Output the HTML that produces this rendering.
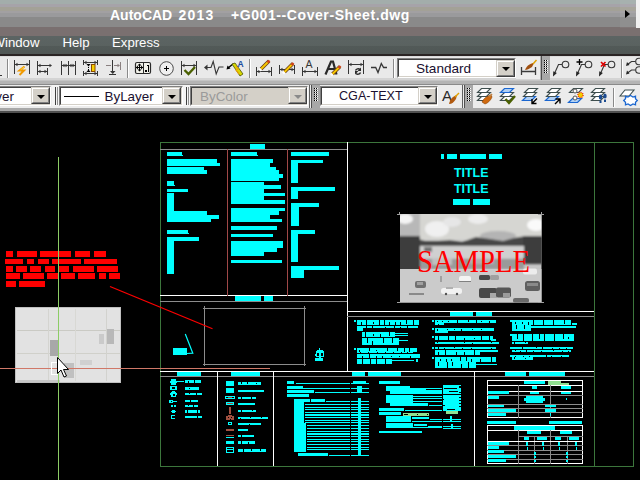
<!DOCTYPE html>
<html><head><meta charset="utf-8">
<style>
html,body{margin:0;padding:0;width:640px;height:480px;overflow:hidden;background:#000;}
body{position:relative;font-family:"Liberation Sans",sans-serif;}
.a{position:absolute;}
#title{left:0;top:0;width:640px;height:56px;
background:linear-gradient(to bottom,#a3adab 0px,#a3adab 4px,#a6a3a9 4px,#a6a3a9 7.5px,#a3a197 7.5px,#a3a197 11px,#a2a0a2 11px,#a2a0a2 13.5px,#9a9a9c 13.5px,#9a9a9c 17.5px,#8a8a8a 17.5px,#8a8a8a 27px,#7a7070 27px,#7a7070 36.5px,#5c6463 36.5px,#5a6260 46px,#525a58 46px,#505755 54px,#2a2424 54px,#2a2424 56px);}
.tt{color:#fff;font-weight:bold;font-size:14px;top:7px;white-space:nowrap;}
.mm{color:#fff;font-size:13.2px;top:35px;white-space:nowrap;}
#tb1{left:0;top:56px;width:640px;height:24px;background:#e9e9e9;}
#tb2{left:0;top:80px;width:640px;height:34px;
background:linear-gradient(to bottom,#c4c4c4 0px,#c4c4c4 1px,#b4b4b4 1px,#b4b4b4 4px,#8a8a8a 4px,#8a8a8a 5px,#ececec 5px,#ececec 28px,#a8a8a8 28px,#a8a8a8 31px,#505050 31px,#505050 33px,#000 33px);}
.combo{position:absolute;background:#fff;border-top:1px solid #808080;border-left:1px solid #808080;border-bottom:1px solid #fff;border-right:1px solid #fff;box-sizing:border-box;}
.combo .in{position:absolute;left:0;top:0;right:0;bottom:0;border-top:1px solid #404040;border-left:1px solid #404040;border-bottom:1px solid #d4d0c8;border-right:1px solid #d4d0c8;}
.btn{position:absolute;background:#d4d0c8;box-sizing:border-box;border-top:1px solid #d4d0c8;border-left:1px solid #d4d0c8;border-right:1px solid #404040;border-bottom:1px solid #404040;}
.btn .in2{position:absolute;left:0;top:0;right:0;bottom:0;border-top:1px solid #fff;border-left:1px solid #fff;border-right:1px solid #808080;border-bottom:1px solid #808080;}
.tri{position:absolute;width:0;height:0;border-left:4px solid transparent;border-right:4px solid transparent;border-top:4px solid #000;}
.ct{position:absolute;font-size:13.4px;color:#1a1030;white-space:nowrap;}
</style></head><body>
<div id="title" class="a"></div>
<div class="a tt" style="left:110px;">AutoCAD</div>
<div class="a tt" style="left:178.5px;letter-spacing:1.2px;">2013</div>
<div class="a tt" style="left:231px;letter-spacing:0.58px;">+G001--Cover-Sheet.dwg</div>
<div class="a" style="left:620px;top:0;width:16px;height:28px;background:rgba(255,255,255,0.05);"></div>
<div class="a" style="left:636px;top:0;width:4px;height:28px;background:#f0f0f0;"></div>
<div class="a" style="left:625px;top:10px;width:0;height:0;border-top:4.5px solid transparent;border-bottom:4.5px solid transparent;border-left:5px solid #000;"></div>
<div class="a mm" style="left:-7.5px;">Window</div>
<div class="a mm" style="left:62.5px;">Help</div>
<div class="a mm" style="left:112px;">Express</div>

<div id="tb1" class="a"></div>
<div id="tb2" class="a"></div>


<svg class="a" style="left:0;top:0" width="640" height="114" viewBox="0 0 640 114">
<g shape-rendering="crispEdges">
<rect x="0" y="56" width="640" height="1" fill="#dcdcdc"/>
<rect x="0" y="78" width="640" height="2" fill="#d4d4d4"/>
<!-- separators row1 -->
<rect x="7" y="59" width="1" height="19" fill="#8a8a8a"/><rect x="8" y="59" width="1" height="19" fill="#fff"/>
<rect x="127" y="59" width="1" height="19" fill="#8a8a8a"/><rect x="128" y="59" width="1" height="19" fill="#fff"/>
<rect x="249" y="59" width="1" height="19" fill="#8a8a8a"/><rect x="250" y="59" width="1" height="19" fill="#fff"/>
<rect x="393" y="59" width="1" height="19" fill="#8a8a8a"/><rect x="394" y="59" width="1" height="19" fill="#fff"/>
<rect x="621" y="59" width="1" height="19" fill="#8a8a8a"/><rect x="622" y="59" width="1" height="19" fill="#fff"/>
</g>
<g shape-rendering="crispEdges">
<rect x="0" y="75" width="2" height="1" fill="#363636"/>
<rect x="14" y="60" width="1" height="14" fill="#363636"/>
<rect x="29" y="60" width="1" height="14" fill="#363636"/>
<rect x="15" y="64" width="14" height="1" fill="#363636"/>
</g>
<path d="M15 64.5l2.5-1.8v3.6z" fill="#363636"/>
<path d="M29 64.5l-2.5-1.8v3.6z" fill="#363636"/>
<g shape-rendering="crispEdges">
<rect x="37" y="61" width="1" height="14" fill="#363636"/>
<rect x="38" y="65" width="13" height="1" fill="#363636"/>
<rect x="47" y="68" width="1" height="7" fill="#363636"/>
<rect x="38" y="71" width="9" height="1" fill="#363636"/>
</g>
<path d="M38 65.5l2.5-1.8v3.6z" fill="#363636"/>
<path d="M52 65.5l-2.5-1.8v3.6z" fill="#363636"/>
<path d="M38 71.5l2.5-1.8v3.6z" fill="#363636"/>
<path d="M47 71.5l-2.5-1.8v3.6z" fill="#363636"/>
<g shape-rendering="crispEdges">
<rect x="61" y="61" width="1" height="14" fill="#363636"/>
<rect x="68" y="61" width="1" height="14" fill="#363636"/>
<rect x="75" y="61" width="1" height="14" fill="#363636"/>
<rect x="62" y="65" width="13" height="1" fill="#363636"/>
</g>
<path d="M62 65.5l2.5-1.8v3.6z" fill="#363636"/>
<path d="M68 65.5l-2.5-1.8v3.6z" fill="#363636"/>
<path d="M69 65.5l2.5-1.8v3.6z" fill="#363636"/>
<path d="M75 65.5l-2.5-1.8v3.6z" fill="#363636"/>
<g shape-rendering="crispEdges">
<rect x="83" y="60" width="1" height="5" fill="#363636"/>
<rect x="97" y="60" width="1" height="5" fill="#363636"/>
<rect x="84" y="62" width="13" height="1" fill="#363636"/>
<rect x="83" y="71" width="1" height="5" fill="#363636"/>
<rect x="97" y="71" width="1" height="5" fill="#363636"/>
<rect x="84" y="73" width="13" height="1" fill="#363636"/>
<rect x="88" y="67" width="1" height="1" fill="#000"/>
<rect x="88" y="69" width="1" height="1" fill="#000"/>
</g>
<path d="M84 62.5l2.5-1.8v3.6z" fill="#363636"/>
<path d="M97 62.5l-2.5-1.8v3.6z" fill="#363636"/>
<path d="M84 73.5l2.5-1.8v3.6z" fill="#363636"/>
<path d="M97 73.5l-2.5-1.8v3.6z" fill="#363636"/>
<path d="M86.5 64h4l-2 2.5z" fill="#000"/><path d="M86.5 72h4l-2-2.5z" fill="#000"/>
<rect x="91.5" y="64.5" width="3.5" height="7" fill="#f8d000" stroke="#8a4a00" stroke-width="1"/>
<g shape-rendering="crispEdges">
<rect x="112" y="60" width="1" height="11" fill="#363636"/>
<rect x="109" y="74" width="7" height="1" fill="#363636"/>
<rect x="106" y="65" width="5" height="1" fill="#8a8080"/>
<rect x="114" y="65" width="5" height="1" fill="#8a8080"/>
<rect x="120" y="62" width="1" height="8" fill="#8a8080"/>
</g>
<path d="M24.5 66.5l-5 4h4.5l-4.5 4.5" stroke="#f09a00" stroke-width="2" fill="none"/><path d="M24 67l-3.5 3" stroke="#ffe040" stroke-width="0.8"/>
<path d="M110 71h5.5l-2.75 3z" fill="#363636"/>
<path d="M120 65.5l-2.5-1.8v3.6z" fill="#8a8080"/>
<rect x="135.5" y="62.5" width="15" height="11" rx="1.5" fill="#f2f2ea" stroke="#2a2a2a" stroke-width="1.2"/>
<g shape-rendering="crispEdges">
<rect x="143" y="63" width="1" height="10" fill="#2a2a2a"/>
<rect x="139" y="64" width="1" height="7" fill="#000"/>
<rect x="136" y="67" width="7" height="1" fill="#000"/>
<rect x="145" y="70" width="1.5" height="2" fill="#000"/>
<rect x="147.5" y="64.5" width="1.5" height="7.5" fill="#000"/><rect x="146.5" y="65" width="1" height="1" fill="#000"/>
</g>
<path d="M139.5 63.5l-2 2h4zM139.5 71.5l-2-2h4zM136 67.5l2-2v4zM143 67.5l-2-2v4z" fill="#000"/>
<circle cx="166.5" cy="68.5" r="6.8" fill="#efefef" stroke="#4a4a4a" stroke-width="1"/>
<g shape-rendering="crispEdges">
<rect x="166" y="66" width="1.4" height="5" fill="#000"/>
<rect x="164" y="67.8" width="5" height="1.4" fill="#000"/>
<rect x="181" y="61" width="1" height="14" fill="#363636"/>
<rect x="196" y="61" width="1" height="14" fill="#363636"/>
<rect x="182" y="65" width="14" height="1" fill="#363636"/>
</g>
<path d="M182 65.5l2.5-1.8v3.6z" fill="#363636"/>
<path d="M196 65.5l-2.5-1.8v3.6z" fill="#363636"/>
<path d="M184.5 70l4 4 6.5-7" stroke="#4a6000" stroke-width="2.4" fill="none"/>
<path d="M205 67.5h6l2.2-6 3 12.5 2.8-7h4.5" stroke="#363636" stroke-width="1.1" fill="none"/>
<path d="M204 67.5l3.5-3v6z" fill="#363636"/>
<path d="M228 68l5-4" stroke="#000" stroke-width="1.4"/><path d="M226.5 69.5l1-4 3 3z" fill="#000"/>
<path d="M232 64l3-1 8 11-3 2z" fill="#d8d800" stroke="#4a5000" stroke-width="0.8"/>
<path d="M236 66l2 3-2 1 3 4" stroke="#f0a000" stroke-width="1.2" fill="none"/>
<text x="237.5" y="66.5" font-size="8.5" font-weight="bold" fill="#1a4aa0" font-family="Liberation Sans">A</text>
<g shape-rendering="crispEdges">
<rect x="256" y="67" width="1" height="9" fill="#363636"/>
<rect x="271" y="67" width="1" height="9" fill="#363636"/>
<rect x="257" y="71" width="14" height="1" fill="#363636"/>
<rect x="279" y="65" width="1" height="9" fill="#363636"/>
<rect x="294" y="65" width="1" height="9" fill="#363636"/>
<rect x="280" y="69" width="14" height="1" fill="#363636"/>
<rect x="302" y="67" width="1" height="9" fill="#363636"/>
<rect x="317" y="67" width="1" height="9" fill="#363636"/>
<rect x="303" y="71" width="14" height="1" fill="#363636"/>
<rect x="348" y="60" width="1" height="14" fill="#363636"/>
<rect x="363" y="60" width="1" height="14" fill="#363636"/>
<rect x="349" y="64" width="14" height="1" fill="#363636"/>
</g>
<path d="M257 71.5l2.5-1.8v3.6z" fill="#363636"/>
<path d="M271 71.5l-2.5-1.8v3.6z" fill="#363636"/>
<path d="M280 69.5l2.5-1.8v3.6z" fill="#363636"/>
<path d="M294 69.5l-2.5-1.8v3.6z" fill="#363636"/>
<path d="M303 71.5l2.5-1.8v3.6z" fill="#363636"/>
<path d="M317 71.5l-2.5-1.8v3.6z" fill="#363636"/>
<path d="M349 64.5l2.5-1.8v3.6z" fill="#363636"/>
<path d="M363 64.5l-2.5-1.8v3.6z" fill="#363636"/>
<path d="M325.5 74.5L331 61.5h2L336.5 74.5M328 69h6" stroke="#2a2a2a" stroke-width="2.2" fill="none"/>
<g stroke-linecap="butt">
<path d="M261 69L269 61" stroke="#6a3a10" stroke-width="3.6"/><path d="M261 69L269 61" stroke="#f8c800" stroke-width="2"/>
<path d="M267.5 62.5L269.5 60.5" stroke="#d04020" stroke-width="2.4"/>
<path d="M261 69l-1.5 1.5" stroke="#fff" stroke-width="2.6"/>
<path d="M284.5 72L293 63.5" stroke="#6a3a10" stroke-width="3.6"/><path d="M284.5 72L293 63.5" stroke="#f8c800" stroke-width="2"/>
<path d="M291.5 65.0L293.5 63.0" stroke="#d04020" stroke-width="2.4"/>
<path d="M284.5 72l-1.5 1.5" stroke="#fff" stroke-width="2.6"/>
<path d="M332.5 74L340 66.5" stroke="#6a3a10" stroke-width="3.6"/><path d="M332.5 74L340 66.5" stroke="#f8c800" stroke-width="2"/>
<path d="M338.5 68.0L340.5 66.0" stroke="#d04020" stroke-width="2.4"/>
<path d="M332.5 74l-1.5 1.5" stroke="#fff" stroke-width="2.6"/>
</g>
<text x="305.5" y="68" font-size="10.5" fill="#363636" font-family="Liberation Sans">A</text>
<path d="M355.5 70.5a2.8 2.8 0 0 1 4.5-1M360.5 72.5a2.8 2.8 0 0 1 -4.5 1" stroke="#2a2a2a" stroke-width="1.4" fill="none"/><path d="M361 67.5v3.5h-3.5zM355 74.5v-3.5h3.5z" fill="#2a2a2a"/>
<path d="M371 67.5h4.7l2.3 5 3.3-9 2.3 4h3.4" stroke="#363636" stroke-width="1.3" fill="none"/>
<!-- standard combo bg -->
</svg>


<!-- combos -->
<div class="combo" style="left:397px;top:58px;width:119px;height:20px;"><div class="in"></div></div>
<div class="btn" style="left:496px;top:60px;width:19px;height:17px;"><div class="in2"></div></div>
<div class="tri" style="left:501.5px;top:67px;"></div>
<div class="ct" style="left:416px;top:61px;font-size:13.6px;">Standard</div>
<div class="a" style="left:516px;top:57px;width:24px;height:22px;background:#ececec;"></div>
<div class="a" style="left:540px;top:56px;width:2px;height:24px;background:#b0b0b0;"></div>
<div class="a" style="left:541px;top:56px;width:9px;height:24px;background:#a8a8a8;border-left:1px solid #505050;box-sizing:border-box;"></div>

<!-- row2 -->
<div class="combo" style="left:-4px;top:86px;width:55px;height:20px;"><div class="in"></div></div>
<div class="btn" style="left:31px;top:87px;width:19px;height:17px;"><div class="in2"></div></div>
<div class="tri" style="left:36.5px;top:94.5px;"></div>
<div class="ct" style="left:-19.6px;top:89px;">Layer</div>
<div class="a" style="left:52px;top:85px;width:7px;height:21px;background:#f4f4f4;"></div>
<div class="a" style="left:54.5px;top:87px;width:1px;height:18px;background:#404040;"></div>
<div class="a" style="left:56.5px;top:87px;width:1px;height:18px;background:#909090;"></div>
<div class="a" style="left:183px;top:85px;width:7px;height:21px;background:#f4f4f4;"></div>
<div class="a" style="left:185.5px;top:87px;width:1px;height:18px;background:#404040;"></div>
<div class="a" style="left:187.5px;top:87px;width:1px;height:18px;background:#909090;"></div>
<div class="combo" style="left:59px;top:86px;width:124px;height:20px;"><div class="in"></div></div>
<div class="btn" style="left:162px;top:87px;width:19px;height:17px;"><div class="in2"></div></div>
<div class="tri" style="left:167.5px;top:94.5px;"></div>
<div class="a" style="left:64px;top:96px;width:35px;height:1px;background:#000;"></div>
<div class="ct" style="left:104.5px;top:89px;">ByLayer</div>
<div class="combo" style="left:190px;top:86px;width:118px;height:20px;background:#d4d0c8"><div class="in"></div></div>
<div class="btn" style="left:288px;top:87px;width:19px;height:17px;"><div class="in2"></div></div>
<div class="tri" style="left:293.5px;top:94.5px;border-top-color:#8a8a8a"></div>
<div class="ct" style="left:200px;top:89px;color:#9a9a9a;">ByColor</div>
<div class="a" style="left:309px;top:85px;width:1px;height:23px;background:#606060;"></div><div class="a" style="left:311px;top:85px;width:9px;height:23px;background:#a8a8a8;border-left:1px solid #505050;box-sizing:border-box;"></div>
<div class="combo" style="left:320px;top:86px;width:118px;height:20px;"><div class="in"></div></div>
<div class="btn" style="left:418px;top:87px;width:19px;height:17px;"><div class="in2"></div></div>
<div class="tri" style="left:423.5px;top:94.5px;"></div>
<div class="ct" style="left:339px;top:89px;font-size:12.6px;">CGA-TEXT</div>
<div class="a" style="left:438px;top:85px;width:24px;height:22px;background:#ececec;"></div>
<div class="a" style="left:462px;top:85px;width:1px;height:23px;background:#606060;"></div><div class="a" style="left:464px;top:85px;width:9px;height:23px;background:#a8a8a8;border-left:1px solid #505050;box-sizing:border-box;"></div>


<svg class="a" style="left:0;top:0" width="640" height="114" viewBox="0 0 640 114">
<g shape-rendering="crispEdges">
<rect x="613" y="88" width="1" height="19" fill="#8a8a8a"/><rect x="614" y="88" width="1" height="19" fill="#fff"/>
</g>
<!-- grips dots -->
<g shape-rendering="crispEdges"><rect x="544" y="60" width="1" height="1" fill="#000"/><rect x="545" y="60" width="1" height="1" fill="#fff"/><rect x="546" y="60" width="1" height="1" fill="#000"/><rect x="547" y="60" width="1" height="1" fill="#fff"/><rect x="544" y="62" width="1" height="1" fill="#000"/><rect x="545" y="62" width="1" height="1" fill="#fff"/><rect x="546" y="62" width="1" height="1" fill="#000"/><rect x="547" y="62" width="1" height="1" fill="#fff"/><rect x="544" y="64" width="1" height="1" fill="#000"/><rect x="545" y="64" width="1" height="1" fill="#fff"/><rect x="546" y="64" width="1" height="1" fill="#000"/><rect x="547" y="64" width="1" height="1" fill="#fff"/><rect x="544" y="66" width="1" height="1" fill="#000"/><rect x="545" y="66" width="1" height="1" fill="#fff"/><rect x="546" y="66" width="1" height="1" fill="#000"/><rect x="547" y="66" width="1" height="1" fill="#fff"/><rect x="544" y="68" width="1" height="1" fill="#000"/><rect x="545" y="68" width="1" height="1" fill="#fff"/><rect x="546" y="68" width="1" height="1" fill="#000"/><rect x="547" y="68" width="1" height="1" fill="#fff"/><rect x="544" y="70" width="1" height="1" fill="#000"/><rect x="545" y="70" width="1" height="1" fill="#fff"/><rect x="546" y="70" width="1" height="1" fill="#000"/><rect x="547" y="70" width="1" height="1" fill="#fff"/><rect x="544" y="72" width="1" height="1" fill="#000"/><rect x="545" y="72" width="1" height="1" fill="#fff"/><rect x="546" y="72" width="1" height="1" fill="#000"/><rect x="547" y="72" width="1" height="1" fill="#fff"/><rect x="314" y="88" width="1" height="1" fill="#000"/><rect x="315" y="88" width="1" height="1" fill="#fff"/><rect x="316" y="88" width="1" height="1" fill="#000"/><rect x="317" y="88" width="1" height="1" fill="#fff"/><rect x="314" y="90" width="1" height="1" fill="#000"/><rect x="315" y="90" width="1" height="1" fill="#fff"/><rect x="316" y="90" width="1" height="1" fill="#000"/><rect x="317" y="90" width="1" height="1" fill="#fff"/><rect x="314" y="92" width="1" height="1" fill="#000"/><rect x="315" y="92" width="1" height="1" fill="#fff"/><rect x="316" y="92" width="1" height="1" fill="#000"/><rect x="317" y="92" width="1" height="1" fill="#fff"/><rect x="314" y="94" width="1" height="1" fill="#000"/><rect x="315" y="94" width="1" height="1" fill="#fff"/><rect x="316" y="94" width="1" height="1" fill="#000"/><rect x="317" y="94" width="1" height="1" fill="#fff"/><rect x="314" y="96" width="1" height="1" fill="#000"/><rect x="315" y="96" width="1" height="1" fill="#fff"/><rect x="316" y="96" width="1" height="1" fill="#000"/><rect x="317" y="96" width="1" height="1" fill="#fff"/><rect x="314" y="98" width="1" height="1" fill="#000"/><rect x="315" y="98" width="1" height="1" fill="#fff"/><rect x="316" y="98" width="1" height="1" fill="#000"/><rect x="317" y="98" width="1" height="1" fill="#fff"/><rect x="314" y="100" width="1" height="1" fill="#000"/><rect x="315" y="100" width="1" height="1" fill="#fff"/><rect x="316" y="100" width="1" height="1" fill="#000"/><rect x="317" y="100" width="1" height="1" fill="#fff"/><rect x="467" y="88" width="1" height="1" fill="#000"/><rect x="468" y="88" width="1" height="1" fill="#fff"/><rect x="469" y="88" width="1" height="1" fill="#000"/><rect x="470" y="88" width="1" height="1" fill="#fff"/><rect x="467" y="90" width="1" height="1" fill="#000"/><rect x="468" y="90" width="1" height="1" fill="#fff"/><rect x="469" y="90" width="1" height="1" fill="#000"/><rect x="470" y="90" width="1" height="1" fill="#fff"/><rect x="467" y="92" width="1" height="1" fill="#000"/><rect x="468" y="92" width="1" height="1" fill="#fff"/><rect x="469" y="92" width="1" height="1" fill="#000"/><rect x="470" y="92" width="1" height="1" fill="#fff"/><rect x="467" y="94" width="1" height="1" fill="#000"/><rect x="468" y="94" width="1" height="1" fill="#fff"/><rect x="469" y="94" width="1" height="1" fill="#000"/><rect x="470" y="94" width="1" height="1" fill="#fff"/><rect x="467" y="96" width="1" height="1" fill="#000"/><rect x="468" y="96" width="1" height="1" fill="#fff"/><rect x="469" y="96" width="1" height="1" fill="#000"/><rect x="470" y="96" width="1" height="1" fill="#fff"/><rect x="467" y="98" width="1" height="1" fill="#000"/><rect x="468" y="98" width="1" height="1" fill="#fff"/><rect x="469" y="98" width="1" height="1" fill="#000"/><rect x="470" y="98" width="1" height="1" fill="#fff"/><rect x="467" y="100" width="1" height="1" fill="#000"/><rect x="468" y="100" width="1" height="1" fill="#fff"/><rect x="469" y="100" width="1" height="1" fill="#000"/><rect x="470" y="100" width="1" height="1" fill="#fff"/>
</g>
<!-- dimstyle brush icon -->
<path d="M521.5 67v8M535.5 67v8M521.5 71.5h14" stroke="#3a3a3a" stroke-width="1.3" fill="none"/>
<path d="M525 70c2-5 6-7 9-7l-2 4c-3 2-5 3-7 3z" fill="#a05010"/>
<path d="M533 64l3.5-4" stroke="#e0a000" stroke-width="1.5"/>
<!-- multileaders -->
<g stroke="#363636" stroke-width="1.1" fill="none">
<circle cx="565.5" cy="64.5" r="3.3"/><path d="M562 64.5h-3.5l-4 9"/>
<circle cx="588.5" cy="64.5" r="3.3"/><path d="M585 64.5h-3.5l-4 9"/>
<circle cx="611.5" cy="64.5" r="3.3"/><path d="M608 64.5h-3.5l-4 9"/>
<circle cx="639" cy="61.5" r="3.3"/><circle cx="639" cy="70" r="3.3"/><path d="M635.5 61.5h-4l-4 3M635.5 70h-4l-4 3"/>
</g>
<g fill="#262626"><path d="M553 76.5l0.3-5.2 3.6 1.6z"/><path d="M576 76.5l0.3-5.2 3.6 1.6z"/><path d="M599 76.5l0.3-5.2 3.6 1.6z"/><path d="M626 66l1-4 2.5 3z"/><path d="M626 74.5l1-4 2.5 3z"/></g>
<path d="M579.5 59v6M576.5 62h6" stroke="#000" stroke-width="1.3"/>
<path d="M601 62l4.5 4.5M605.5 62l-4.5 4.5" stroke="#e00000" stroke-width="1.7"/>
<!-- text style icon -->
<text x="442" y="101" font-size="15" fill="#2a2a2a" font-family="Liberation Sans">A</text>
<path d="M449 104c1-5 4-8 8-9l-1 4c-2 3-4 5-7 5z" fill="#b05a10"/>
<path d="M455 97l4-4" stroke="#e0a000" stroke-width="1.5"/>
<!-- layer icons -->
<path d="M477.5 100.5l4-4h9l-4 4z" fill="#fff" stroke="#3e4e4e" stroke-width="1.1"/><path d="M477.5 96.5l4-4h9l-4 4z" fill="#fff" stroke="#3e4e4e" stroke-width="1.1"/><path d="M477.5 92.5l4-4h9l-4 4z" fill="#fff" stroke="#3e4e4e" stroke-width="1.1"/><path d="M482 102c2-4 5-6 9-7l1 2c-1 3-4 6-7 7z" fill="#d06a10" stroke="#8a4000" stroke-width="0.6"/><path d="M489 97l3-3" stroke="#c08040" stroke-width="1.6"/><path d="M500.5 100.5l4-4h9l-4 4z" fill="#fff" stroke="#3e4e4e" stroke-width="1.1"/><path d="M500.5 96.5l4-4h9l-4 4z" fill="#fff" stroke="#3e4e4e" stroke-width="1.1"/><path d="M500.5 92.5l4-4h9l-4 4z" fill="#b0d0f4" stroke="#1a66d0" stroke-width="1.2"/><path d="M505.5 99l3.5 4 6-7" stroke="#4a6000" stroke-width="2.4" fill="none"/><path d="M522.5 100.5l4-4h9l-4 4z" fill="#b0d0f4" stroke="#1a66d0" stroke-width="1.2"/><path d="M523.5 96.5l4-4h9l-4 4z" fill="#fff" stroke="#3e4e4e" stroke-width="1.1"/><path d="M524.5 92.5l4-4h9l-4 4z" fill="#fff" stroke="#3e4e4e" stroke-width="1.1"/><path d="M537 98.5l-4.5 4.5M532 99v4.5h4.5" stroke="#000" stroke-width="1.4" fill="none"/><path d="M545.5 100.5l4-4h9l-4 4z" fill="#b0d0f4" stroke="#1a66d0" stroke-width="1.2"/><path d="M546.5 96.5l4-4h9l-4 4z" fill="#fff" stroke="#3e4e4e" stroke-width="1.1"/><path d="M547.5 92.5l4-4h9l-4 4z" fill="#fff" stroke="#3e4e4e" stroke-width="1.1"/><path d="M555 104l4.5-4.5M555.5 99h4.5v4.5" stroke="#000" stroke-width="1.4" fill="none"/><path d="M568.5 102.5l4-4h9l-4 4z" fill="#b0d0f4" stroke="#1a66d0" stroke-width="1.2"/><path d="M569.5 92.5l4-4h9l-4 4z" fill="#fff" stroke="#3e4e4e" stroke-width="1.1"/><circle cx="575" cy="91" r="2" fill="#fff" stroke="#555" stroke-width="1"/><circle cx="575" cy="98" r="2" fill="#fff" stroke="#555" stroke-width="1"/><circle cx="580.5" cy="95" r="2.6" fill="#f0d000" stroke="#f02000" stroke-width="1.3" stroke-dasharray="1 1"/><path d="M591.5 100.5l4-4h9l-4 4z" fill="#fff" stroke="#3e4e4e" stroke-width="1.1"/><path d="M591.5 96.5l4-4h9l-4 4z" fill="#fff" stroke="#3e4e4e" stroke-width="1.1"/><path d="M591.5 92.5l4-4h9l-4 4z" fill="#fff" stroke="#3e4e4e" stroke-width="1.1"/><g fill="#1a4a90"><ellipse cx="600.5" cy="97" rx="1.7" ry="2.6"/><ellipse cx="605" cy="96" rx="1.7" ry="2.6"/><rect x="599.5" y="100.5" width="2" height="2.5"/><rect x="604" y="99.5" width="2" height="2.5"/></g><path d="M620 96l5-6h9l-5 6z" fill="#fff" stroke="#3e4e4e" stroke-width="1.1"/><path d="M628 97l2.5-1.5 2.5 1.5 2.5-0.8v2.5l1.8 1.8-1.8 1.8v2.5l-2.5-0.8-2.5 1.5-2.5-1.5-2.5 0.8v-2.5l-1.8-1.8 1.8-1.8v-2.5z" fill="#fff" stroke="#1a66d0" stroke-width="1.3"/>
</svg>

<!-- drawing area -->
<svg class="a" style="left:0;top:0" width="640" height="480" viewBox="0 0 640 480">
<g shape-rendering="crispEdges">
<rect x="0" y="113" width="640" height="367" fill="#000"/>
<rect x="6" y="251" width="7" height="6" fill="#ff0000"/>
<rect x="17" y="251" width="20" height="6" fill="#ff0000"/>
<rect x="40" y="251" width="31" height="6" fill="#ff0000"/>
<rect x="75" y="251" width="15" height="6" fill="#ff0000"/>
<rect x="94" y="251" width="12" height="6" fill="#ff0000"/>
<rect x="5" y="259" width="18" height="5" fill="#ff0000"/>
<rect x="27" y="259" width="7" height="5" fill="#ff0000"/>
<rect x="38" y="259" width="11" height="5" fill="#ff0000"/>
<rect x="52" y="259" width="29" height="5" fill="#ff0000"/>
<rect x="84" y="259" width="33" height="5" fill="#ff0000"/>
<rect x="6" y="266" width="7" height="6" fill="#ff0000"/>
<rect x="16" y="266" width="11" height="6" fill="#ff0000"/>
<rect x="30" y="266" width="11" height="6" fill="#ff0000"/>
<rect x="45" y="266" width="10" height="6" fill="#ff0000"/>
<rect x="59" y="266" width="10" height="6" fill="#ff0000"/>
<rect x="73" y="266" width="21" height="6" fill="#ff0000"/>
<rect x="97" y="266" width="21" height="6" fill="#ff0000"/>
<rect x="6" y="273" width="14" height="6" fill="#ff0000"/>
<rect x="23" y="273" width="21" height="6" fill="#ff0000"/>
<rect x="47" y="273" width="11" height="6" fill="#ff0000"/>
<rect x="61" y="273" width="14" height="6" fill="#ff0000"/>
<rect x="78" y="273" width="17" height="6" fill="#ff0000"/>
<rect x="99" y="273" width="7" height="6" fill="#ff0000"/>
<rect x="109" y="273" width="11" height="6" fill="#ff0000"/>
<rect x="6" y="281" width="10" height="6" fill="#ff0000"/>
<rect x="19" y="281" width="26" height="6" fill="#ff0000"/>
<rect x="15" y="307" width="106" height="76" fill="#c0c0c0"/>
<rect x="16" y="308" width="104" height="74" fill="#e2e2e2"/>
<rect x="17" y="330" width="103" height="1" fill="#cacac4"/>
<rect x="17" y="353" width="103" height="1" fill="#d0d0ca"/>
<rect x="48" y="309" width="1" height="72" fill="#d4d4d0"/>
<rect x="75" y="309" width="1" height="72" fill="#d8d8d4"/>
<rect x="106" y="309" width="1" height="72" fill="#d2d2ce"/>
<rect x="50" y="340" width="9" height="16" fill="#a8a8a8"/>
<rect x="107" y="329" width="7" height="15" fill="#b8b8b8"/>
<rect x="99" y="334" width="5" height="10" fill="#cacaca"/>
<rect x="64" y="363" width="10" height="15" fill="#c0c0c0"/>
<rect x="80" y="360" width="12" height="5" fill="#d0d0d0"/>
<rect x="17" y="380" width="43" height="2" fill="#c8c8c8"/>
<rect x="160" y="142" width="474" height="1" fill="#3c763c"/>
<rect x="160" y="466" width="474" height="1" fill="#3c763c"/>
<rect x="160" y="142" width="1" height="325" fill="#3c763c"/>
<rect x="633" y="142" width="1" height="325" fill="#3c763c"/>
<rect x="594" y="142" width="1" height="325" fill="#3c763c"/>
<rect x="160" y="149" width="187" height="1" fill="#8c8c8c"/>
<rect x="347" y="142" width="1" height="230" fill="#ffffff"/>
<rect x="160" y="295" width="187" height="1" fill="#ffffff"/>
<rect x="160" y="301" width="187" height="1" fill="#8c8c8c"/>
<rect x="227" y="149" width="1" height="147" fill="#a04848"/>
<rect x="287" y="149" width="1" height="147" fill="#a04848"/>
<rect x="347" y="311" width="247" height="1" fill="#ffffff"/>
<rect x="347" y="316" width="247" height="1" fill="#8c8c8c"/>
<rect x="160" y="371" width="434" height="1" fill="#ffffff"/>
<rect x="160" y="376" width="434" height="1" fill="#8c8c8c"/>
<rect x="217" y="371" width="1" height="95" fill="#ffffff"/>
<rect x="273" y="371" width="1" height="95" fill="#ffffff"/>
<rect x="474" y="371" width="1" height="95" fill="#ffffff"/>
<rect x="167" y="152" width="15" height="3" fill="#00ffff"/>
<rect x="167" y="155" width="16" height="1" fill="#00ffff"/>
<rect x="167" y="159" width="50" height="4" fill="#00ffff"/>
<rect x="167" y="163" width="53" height="3" fill="#00ffff"/>
<rect x="167" y="167" width="37" height="3" fill="#00ffff"/>
<rect x="167" y="170" width="40" height="4" fill="#00ffff"/>
<rect x="167" y="181" width="7" height="4" fill="#00ffff"/>
<rect x="167" y="185" width="8" height="1" fill="#00ffff"/>
<rect x="167" y="189" width="21" height="3" fill="#00ffff"/>
<rect x="167" y="193" width="7" height="18" fill="#00ffff"/>
<rect x="167" y="211" width="40" height="4" fill="#00ffff"/>
<rect x="167" y="215" width="52" height="4" fill="#00ffff"/>
<rect x="167" y="219" width="44" height="3" fill="#00ffff"/>
<rect x="167" y="230" width="21" height="3" fill="#00ffff"/>
<rect x="167" y="233" width="22" height="1" fill="#00ffff"/>
<rect x="167" y="237" width="32" height="4" fill="#00ffff"/>
<rect x="167" y="241" width="7" height="33" fill="#00ffff"/>
<rect x="250" y="144" width="15" height="5" fill="#00ffff"/>
<rect x="231" y="152" width="26" height="3" fill="#00ffff"/>
<rect x="231" y="155" width="27" height="1" fill="#00ffff"/>
<rect x="231" y="159" width="42" height="4" fill="#00ffff"/>
<rect x="231" y="163" width="39" height="4" fill="#00ffff"/>
<rect x="231" y="167" width="45" height="3" fill="#00ffff"/>
<rect x="231" y="170" width="48" height="4" fill="#00ffff"/>
<rect x="231" y="174" width="52" height="4" fill="#00ffff"/>
<rect x="231" y="178" width="48" height="3" fill="#00ffff"/>
<rect x="231" y="182" width="33" height="22" fill="#00ffff"/>
<rect x="264" y="185" width="17" height="4" fill="#00ffff"/>
<rect x="264" y="193" width="21" height="3" fill="#00ffff"/>
<rect x="264" y="200" width="21" height="4" fill="#00ffff"/>
<rect x="231" y="208" width="54" height="3" fill="#00ffff"/>
<rect x="231" y="211" width="48" height="4" fill="#00ffff"/>
<rect x="231" y="215" width="39" height="4" fill="#00ffff"/>
<rect x="231" y="219" width="51" height="3" fill="#00ffff"/>
<rect x="231" y="226" width="46" height="4" fill="#00ffff"/>
<rect x="231" y="234" width="42" height="3" fill="#00ffff"/>
<rect x="231" y="241" width="52" height="7" fill="#00ffff"/>
<rect x="231" y="248" width="46" height="4" fill="#00ffff"/>
<rect x="231" y="252" width="33" height="4" fill="#00ffff"/>
<rect x="231" y="260" width="51" height="3" fill="#00ffff"/>
<rect x="291" y="152" width="38" height="4" fill="#00ffff"/>
<rect x="291" y="160" width="32" height="3" fill="#00ffff"/>
<rect x="291" y="163" width="7" height="20" fill="#00ffff"/>
<rect x="291" y="187" width="44" height="4" fill="#00ffff"/>
<rect x="291" y="191" width="7" height="8" fill="#00ffff"/>
<rect x="291" y="203" width="28" height="4" fill="#00ffff"/>
<rect x="291" y="207" width="8" height="19" fill="#00ffff"/>
<rect x="291" y="230" width="24" height="4" fill="#00ffff"/>
<rect x="291" y="234" width="7" height="28" fill="#00ffff"/>
<rect x="291" y="266" width="48" height="4" fill="#00ffff"/>
<rect x="291" y="270" width="13" height="8" fill="#00ffff"/>
<rect x="235" y="296" width="26" height="5" fill="#00ffff"/>
<rect x="264" y="296" width="9" height="5" fill="#00ffff"/>
<rect x="203" y="308" width="103" height="1" fill="#8c8c8c"/>
<rect x="203" y="364" width="103" height="1" fill="#8c8c8c"/>
<rect x="204" y="306" width="1" height="60" fill="#8c8c8c"/>
<rect x="304" y="306" width="1" height="60" fill="#8c8c8c"/>
<rect x="173" y="348" width="14" height="7" fill="#00ffff"/>
<rect x="441" y="154" width="3" height="5" fill="#00ffff"/>
<rect x="447" y="154" width="10" height="5" fill="#00ffff"/>
<rect x="460" y="154" width="26" height="5" fill="#00ffff"/>
<rect x="489" y="154" width="13" height="5" fill="#00ffff"/>
<rect x="453" y="199" width="17" height="6" fill="#00ffff"/>
<rect x="473" y="199" width="17" height="6" fill="#00ffff"/>
<rect x="450" y="312" width="23" height="4" fill="#00ffff"/>
<rect x="476" y="312" width="16" height="4" fill="#00ffff"/>
<rect x="357" y="320" width="62" height="5" fill="#00ffff"/>
<rect x="361" y="322.0" width="1" height="3.0" fill="#000"/>
<rect x="366" y="320" width="1" height="5" fill="#000"/>
<rect x="373" y="322.0" width="1" height="1.5" fill="#000"/>
<rect x="379" y="320" width="1" height="5" fill="#000"/>
<rect x="384" y="320" width="1" height="5" fill="#000"/>
<rect x="389" y="322.0" width="1" height="3.0" fill="#000"/>
<rect x="395" y="322.0" width="1" height="3.0" fill="#000"/>
<rect x="400" y="322.0" width="1" height="3.0" fill="#000"/>
<rect x="406" y="320" width="1" height="3.5" fill="#000"/>
<rect x="413" y="320" width="1" height="5" fill="#000"/>
<rect x="357" y="326" width="6" height="5" fill="#00ffff"/>
<rect x="363" y="326" width="31" height="2" fill="#00ffff"/>
<rect x="366" y="326" width="1" height="2" fill="#000"/>
<rect x="372" y="326" width="1" height="2" fill="#000"/>
<rect x="377" y="326.8" width="1" height="0.6" fill="#000"/>
<rect x="385" y="326.8" width="1" height="1.2" fill="#000"/>
<rect x="395" y="326" width="23" height="2" fill="#00ffff"/>
<rect x="400" y="326.8" width="1" height="1.2" fill="#000"/>
<rect x="407" y="326" width="1" height="2" fill="#000"/>
<rect x="362" y="332" width="33" height="5" fill="#00ffff"/>
<rect x="365" y="332" width="1" height="5" fill="#000"/>
<rect x="373" y="334.0" width="1" height="1.5" fill="#000"/>
<rect x="380" y="334.0" width="1" height="3.0" fill="#000"/>
<rect x="389" y="332" width="1" height="3.5" fill="#000"/>
<rect x="362" y="338" width="37" height="7" fill="#00ffff"/>
<rect x="367" y="338" width="1" height="4.9" fill="#000"/>
<rect x="372" y="340.8" width="1" height="4.2" fill="#000"/>
<rect x="383" y="338" width="1" height="4.9" fill="#000"/>
<rect x="392" y="338" width="1" height="4.9" fill="#000"/>
<rect x="357" y="348" width="60" height="4" fill="#00ffff"/>
<rect x="359" y="349.6" width="1" height="2.4" fill="#000"/>
<rect x="369" y="348" width="1" height="2.8" fill="#000"/>
<rect x="376" y="349.6" width="1" height="1.2" fill="#000"/>
<rect x="387" y="348" width="1" height="2.8" fill="#000"/>
<rect x="397" y="348" width="1" height="2.8" fill="#000"/>
<rect x="404" y="348" width="1" height="4" fill="#000"/>
<rect x="409" y="348" width="1" height="4" fill="#000"/>
<rect x="357" y="352" width="56" height="1" fill="#00ffff"/>
<rect x="360" y="352" width="1" height="0.7" fill="#000"/>
<rect x="368" y="352" width="1" height="1" fill="#000"/>
<rect x="377" y="352" width="1" height="1" fill="#000"/>
<rect x="385" y="352.4" width="1" height="0.6" fill="#000"/>
<rect x="393" y="352.4" width="1" height="0.3" fill="#000"/>
<rect x="401" y="352.4" width="1" height="0.6" fill="#000"/>
<rect x="407" y="352" width="1" height="0.7" fill="#000"/>
<rect x="357" y="354" width="63" height="4" fill="#00ffff"/>
<rect x="362" y="355.6" width="1" height="2.4" fill="#000"/>
<rect x="369" y="354" width="1" height="4" fill="#000"/>
<rect x="376" y="355.6" width="1" height="2.4" fill="#000"/>
<rect x="382" y="355.6" width="1" height="2.4" fill="#000"/>
<rect x="391" y="355.6" width="1" height="1.2" fill="#000"/>
<rect x="399" y="355.6" width="1" height="1.2" fill="#000"/>
<rect x="410" y="355.6" width="1" height="2.4" fill="#000"/>
<rect x="357" y="359" width="35" height="5" fill="#00ffff"/>
<rect x="362" y="359" width="1" height="5" fill="#000"/>
<rect x="370" y="359" width="1" height="5" fill="#000"/>
<rect x="376" y="359" width="1" height="5" fill="#000"/>
<rect x="385" y="359" width="1" height="5" fill="#000"/>
<rect x="435" y="320" width="61" height="3" fill="#00ffff"/>
<rect x="437" y="321.2" width="1" height="0.9" fill="#000"/>
<rect x="442" y="321.2" width="1" height="0.9" fill="#000"/>
<rect x="448" y="321.2" width="1" height="0.9" fill="#000"/>
<rect x="457" y="320" width="1" height="3" fill="#000"/>
<rect x="468" y="320" width="1" height="2.1" fill="#000"/>
<rect x="476" y="320" width="1" height="3" fill="#000"/>
<rect x="481" y="321.2" width="1" height="0.9" fill="#000"/>
<rect x="489" y="321.2" width="1" height="1.8" fill="#000"/>
<rect x="435" y="323" width="9" height="2" fill="#00ffff"/>
<rect x="438" y="323.8" width="1" height="1.2" fill="#000"/>
<rect x="435" y="328" width="59" height="3" fill="#00ffff"/>
<rect x="437" y="329.2" width="1" height="1.8" fill="#000"/>
<rect x="447" y="329.2" width="1" height="0.9" fill="#000"/>
<rect x="454" y="329.2" width="1" height="0.9" fill="#000"/>
<rect x="461" y="329.2" width="1" height="1.8" fill="#000"/>
<rect x="472" y="329.2" width="1" height="0.9" fill="#000"/>
<rect x="481" y="329.2" width="1" height="0.9" fill="#000"/>
<rect x="435" y="331" width="13" height="2" fill="#00ffff"/>
<rect x="438" y="331.8" width="1" height="0.6" fill="#000"/>
<rect x="435" y="336" width="58" height="4" fill="#00ffff"/>
<rect x="438" y="336" width="1" height="4" fill="#000"/>
<rect x="448" y="336" width="1" height="4" fill="#000"/>
<rect x="455" y="336" width="1" height="4" fill="#000"/>
<rect x="464" y="337.6" width="1" height="2.4" fill="#000"/>
<rect x="474" y="337.6" width="1" height="1.2" fill="#000"/>
<rect x="481" y="336" width="1" height="4" fill="#000"/>
<rect x="489" y="336" width="1" height="4" fill="#000"/>
<rect x="435" y="342" width="64" height="2" fill="#00ffff"/>
<rect x="437" y="342" width="1" height="1.4" fill="#000"/>
<rect x="448" y="342.8" width="1" height="0.6" fill="#000"/>
<rect x="453" y="342.8" width="1" height="0.6" fill="#000"/>
<rect x="464" y="342" width="1" height="1.4" fill="#000"/>
<rect x="472" y="342.8" width="1" height="1.2" fill="#000"/>
<rect x="483" y="342.8" width="1" height="0.6" fill="#000"/>
<rect x="491" y="342" width="1" height="1.4" fill="#000"/>
<rect x="435" y="347" width="61" height="2" fill="#00ffff"/>
<rect x="438" y="347" width="1" height="2" fill="#000"/>
<rect x="444" y="347.8" width="1" height="1.2" fill="#000"/>
<rect x="454" y="347" width="1" height="1.4" fill="#000"/>
<rect x="462" y="347.8" width="1" height="1.2" fill="#000"/>
<rect x="471" y="347.8" width="1" height="1.2" fill="#000"/>
<rect x="482" y="347.8" width="1" height="0.6" fill="#000"/>
<rect x="491" y="347.8" width="1" height="1.2" fill="#000"/>
<rect x="435" y="350" width="45" height="5" fill="#00ffff"/>
<rect x="438" y="352.0" width="1" height="3.0" fill="#000"/>
<rect x="445" y="350" width="1" height="5" fill="#000"/>
<rect x="456" y="352.0" width="1" height="3.0" fill="#000"/>
<rect x="464" y="352.0" width="1" height="3.0" fill="#000"/>
<rect x="474" y="350" width="1" height="5" fill="#000"/>
<rect x="435" y="357" width="61" height="5" fill="#00ffff"/>
<rect x="440" y="359.0" width="1" height="1.5" fill="#000"/>
<rect x="446" y="359.0" width="1" height="3.0" fill="#000"/>
<rect x="451" y="359.0" width="1" height="1.5" fill="#000"/>
<rect x="460" y="357" width="1" height="3.5" fill="#000"/>
<rect x="466" y="357" width="1" height="3.5" fill="#000"/>
<rect x="471" y="359.0" width="1" height="3.0" fill="#000"/>
<rect x="480" y="359.0" width="1" height="3.0" fill="#000"/>
<rect x="491" y="357" width="1" height="5" fill="#000"/>
<rect x="435" y="362" width="41" height="6" fill="#00ffff"/>
<rect x="438" y="362" width="1" height="4.2" fill="#000"/>
<rect x="447" y="362" width="1" height="6" fill="#000"/>
<rect x="452" y="362" width="1" height="4.2" fill="#000"/>
<rect x="461" y="364.4" width="1" height="3.6" fill="#000"/>
<rect x="468" y="362" width="1" height="6" fill="#000"/>
<rect x="512" y="320" width="59" height="5" fill="#00ffff"/>
<rect x="515" y="322.0" width="1" height="1.5" fill="#000"/>
<rect x="522" y="322.0" width="1" height="1.5" fill="#000"/>
<rect x="528" y="322.0" width="1" height="3.0" fill="#000"/>
<rect x="533" y="320" width="1" height="5" fill="#000"/>
<rect x="543" y="320" width="1" height="5" fill="#000"/>
<rect x="553" y="320" width="1" height="5" fill="#000"/>
<rect x="564" y="320" width="1" height="3.5" fill="#000"/>
<rect x="512" y="325" width="19" height="6" fill="#00ffff"/>
<rect x="516" y="325" width="1" height="4.2" fill="#000"/>
<rect x="524" y="325" width="1" height="4.2" fill="#000"/>
<rect x="512" y="334" width="62" height="7" fill="#00ffff"/>
<rect x="517" y="334" width="1" height="4.9" fill="#000"/>
<rect x="523" y="334" width="1" height="7" fill="#000"/>
<rect x="532" y="334" width="1" height="7" fill="#000"/>
<rect x="539" y="334" width="1" height="4.9" fill="#000"/>
<rect x="544" y="334" width="1" height="7" fill="#000"/>
<rect x="554" y="334" width="1" height="7" fill="#000"/>
<rect x="563" y="334" width="1" height="4.9" fill="#000"/>
<rect x="568" y="336.8" width="1" height="2.1" fill="#000"/>
<rect x="512" y="342" width="16" height="2" fill="#00ffff"/>
<rect x="514" y="342" width="1" height="2" fill="#000"/>
<rect x="525" y="342" width="1" height="1.4" fill="#000"/>
<rect x="510" y="347" width="63" height="2" fill="#00ffff"/>
<rect x="515" y="347.8" width="1" height="0.6" fill="#000"/>
<rect x="522" y="347" width="1" height="2" fill="#000"/>
<rect x="531" y="347.8" width="1" height="0.6" fill="#000"/>
<rect x="536" y="347" width="1" height="1.4" fill="#000"/>
<rect x="542" y="347" width="1" height="2" fill="#000"/>
<rect x="547" y="347.8" width="1" height="0.6" fill="#000"/>
<rect x="552" y="347.8" width="1" height="1.2" fill="#000"/>
<rect x="559" y="347.8" width="1" height="1.2" fill="#000"/>
<rect x="566" y="347.8" width="1" height="1.2" fill="#000"/>
<rect x="512" y="350" width="59" height="2" fill="#00ffff"/>
<rect x="515" y="350" width="1" height="1.4" fill="#000"/>
<rect x="520" y="350.8" width="1" height="1.2" fill="#000"/>
<rect x="526" y="350" width="1" height="2" fill="#000"/>
<rect x="533" y="350.8" width="1" height="1.2" fill="#000"/>
<rect x="541" y="350.8" width="1" height="1.2" fill="#000"/>
<rect x="548" y="350.8" width="1" height="0.6" fill="#000"/>
<rect x="553" y="350" width="1" height="1.4" fill="#000"/>
<rect x="562" y="350.8" width="1" height="1.2" fill="#000"/>
<rect x="568" y="350.8" width="1" height="1.2" fill="#000"/>
<rect x="510" y="355" width="59" height="2" fill="#00ffff"/>
<rect x="515" y="355.8" width="1" height="1.2" fill="#000"/>
<rect x="523" y="355.8" width="1" height="1.2" fill="#000"/>
<rect x="529" y="355.8" width="1" height="1.2" fill="#000"/>
<rect x="540" y="355.8" width="1" height="0.6" fill="#000"/>
<rect x="546" y="355" width="1" height="2" fill="#000"/>
<rect x="551" y="355.8" width="1" height="1.2" fill="#000"/>
<rect x="561" y="355.8" width="1" height="1.2" fill="#000"/>
<rect x="512" y="357" width="21" height="3" fill="#00ffff"/>
<rect x="514" y="357" width="1" height="2.1" fill="#000"/>
<rect x="525" y="358.2" width="1" height="0.9" fill="#000"/>
<rect x="394" y="333" width="14" height="1" fill="#00ffff"/>
<rect x="394" y="335" width="14" height="1" fill="#00ffff"/>
<rect x="399" y="340" width="9" height="1" fill="#00ffff"/>
<rect x="392" y="360" width="22" height="1" fill="#00ffff"/>
<rect x="416" y="359" width="2" height="3" fill="#00ffff"/>
<rect x="480" y="350" width="18" height="2" fill="#00ffff"/>
<rect x="491" y="339" width="5" height="2" fill="#00ffff"/>
<rect x="476" y="364" width="21" height="1" fill="#00ffff"/>
<rect x="531" y="326" width="45" height="2" fill="#00ffff"/>
<rect x="572" y="323" width="5" height="2" fill="#00ffff"/>
<rect x="354" y="320" width="2" height="2" fill="#00ffff"/>
<rect x="354" y="348" width="2" height="2" fill="#00ffff"/>
<rect x="432" y="320" width="2" height="2" fill="#00ffff"/>
<rect x="432" y="328" width="2" height="2" fill="#00ffff"/>
<rect x="432" y="336" width="2" height="2" fill="#00ffff"/>
<rect x="432" y="347" width="2" height="2" fill="#00ffff"/>
<rect x="432" y="357" width="2" height="2" fill="#00ffff"/>
<rect x="510" y="320" width="2" height="2" fill="#00ffff"/>
<rect x="510" y="334" width="2" height="2" fill="#00ffff"/>
<rect x="177" y="372" width="24" height="4" fill="#00ffff"/>
<rect x="231" y="372" width="29" height="4" fill="#00ffff"/>
<rect x="352" y="372" width="13" height="4" fill="#00ffff"/>
<rect x="368" y="372" width="33" height="4" fill="#00ffff"/>
<rect x="505" y="372" width="21" height="4" fill="#00ffff"/>
<rect x="529" y="372" width="36" height="4" fill="#00ffff"/>
<rect x="171" y="379" width="5" height="6" fill="#00ffff"/>
<rect x="170" y="381" width="7" height="2" fill="#00ffff"/>
<rect x="177" y="381" width="7" height="1" fill="#00ffff"/>
<rect x="170" y="386" width="7" height="4" fill="#00ffff"/>
<rect x="171" y="392" width="5" height="5" fill="#00ffff"/>
<rect x="170" y="393" width="7" height="2" fill="#00ffff"/>
<rect x="172" y="391" width="3" height="1" fill="#00ffff"/>
<rect x="169" y="400" width="4" height="3" fill="#00ffff"/>
<rect x="173" y="401" width="4" height="1" fill="#00ffff"/>
<rect x="171" y="405" width="2" height="2" fill="#00ffff"/>
<rect x="174" y="405" width="2" height="2" fill="#00ffff"/>
<rect x="172" y="410" width="3" height="3" fill="#00ffff"/>
<rect x="171" y="411" width="5" height="1" fill="#00ffff"/>
<rect x="171" y="415" width="4" height="1" fill="#00ffff"/>
<rect x="171" y="418" width="4" height="1" fill="#00ffff"/>
<rect x="171" y="416" width="1" height="2" fill="#00ffff"/>
<rect x="172" y="387" width="3" height="2" fill="#000"/>
<rect x="170.5" y="400.5" width="1.0" height="1.5" fill="#000"/>
<rect x="172.5" y="394" width="2.0" height="2" fill="#000"/>
<rect x="185" y="380" width="16" height="3" fill="#00ffff"/>
<rect x="188" y="381.2" width="1" height="1.8" fill="#000"/>
<rect x="194" y="380" width="1" height="3" fill="#000"/>
<rect x="185" y="387" width="14" height="3" fill="#00ffff"/>
<rect x="189" y="388.2" width="1" height="0.9" fill="#000"/>
<rect x="185" y="393" width="17" height="2" fill="#00ffff"/>
<rect x="189" y="393" width="1" height="1.4" fill="#000"/>
<rect x="196" y="393" width="1" height="2" fill="#000"/>
<rect x="185" y="400" width="13" height="2" fill="#00ffff"/>
<rect x="190" y="400" width="1" height="2" fill="#000"/>
<rect x="185" y="405" width="13" height="2" fill="#00ffff"/>
<rect x="188" y="405" width="1" height="1.4" fill="#000"/>
<rect x="193" y="405" width="1" height="2" fill="#000"/>
<rect x="185" y="410" width="15" height="3" fill="#00ffff"/>
<rect x="187" y="410" width="1" height="3" fill="#000"/>
<rect x="197" y="410" width="1" height="3" fill="#000"/>
<rect x="185" y="416" width="17" height="2" fill="#00ffff"/>
<rect x="188" y="416.8" width="1" height="0.6" fill="#000"/>
<rect x="197" y="416" width="1" height="2" fill="#000"/>
<rect x="226" y="381" width="8" height="5" fill="#00ffff"/>
<rect x="226" y="388" width="8" height="5" fill="#00ffff"/>
<rect x="226" y="441" width="8" height="3" fill="#00ffff"/>
<rect x="238" y="382" width="23" height="2.5" fill="#00ffff"/>
<rect x="241" y="382" width="1" height="1.8" fill="#000"/>
<rect x="247" y="382" width="1" height="1.8" fill="#000"/>
<rect x="256" y="383.0" width="1" height="0.8" fill="#000"/>
<rect x="238" y="389.5" width="26" height="2.5" fill="#00ffff"/>
<rect x="241" y="390.5" width="1" height="0.8" fill="#000"/>
<rect x="250" y="390.5" width="1" height="0.8" fill="#000"/>
<rect x="261" y="390.5" width="1" height="0.8" fill="#000"/>
<rect x="238" y="396.5" width="18" height="2.5" fill="#00ffff"/>
<rect x="241" y="396.5" width="1" height="2.5" fill="#000"/>
<rect x="251" y="396.5" width="1" height="2.5" fill="#000"/>
<rect x="238" y="402.5" width="17" height="2.5" fill="#00ffff"/>
<rect x="243" y="403.5" width="1" height="0.8" fill="#000"/>
<rect x="238" y="410" width="18" height="2" fill="#00ffff"/>
<rect x="241" y="410" width="1" height="2" fill="#000"/>
<rect x="252" y="410" width="1" height="1.4" fill="#000"/>
<rect x="238" y="417" width="30" height="2" fill="#00ffff"/>
<rect x="240" y="417.8" width="1" height="1.2" fill="#000"/>
<rect x="250" y="417" width="1" height="1.4" fill="#000"/>
<rect x="261" y="417" width="1" height="1.4" fill="#000"/>
<rect x="238" y="423" width="23" height="2" fill="#00ffff"/>
<rect x="241" y="423.8" width="1" height="0.6" fill="#000"/>
<rect x="249" y="423.8" width="1" height="1.2" fill="#000"/>
<rect x="238" y="429" width="10" height="2" fill="#00ffff"/>
<rect x="242" y="429.8" width="1" height="0.6" fill="#000"/>
<rect x="238" y="435" width="16" height="2" fill="#00ffff"/>
<rect x="241" y="435" width="1" height="2" fill="#000"/>
<rect x="248" y="435.8" width="1" height="0.6" fill="#000"/>
<rect x="238" y="441" width="17" height="3" fill="#00ffff"/>
<rect x="241" y="441" width="1" height="3" fill="#000"/>
<rect x="248" y="442.2" width="1" height="1.8" fill="#000"/>
<rect x="238" y="449" width="28" height="3" fill="#00ffff"/>
<rect x="243" y="449" width="1" height="3" fill="#000"/>
<rect x="251" y="449" width="1" height="2.1" fill="#000"/>
<rect x="260" y="449" width="1" height="2.1" fill="#000"/>
<rect x="225" y="396" width="10" height="1" fill="#00ffff"/>
<rect x="225" y="398" width="10" height="1" fill="#00ffff"/>
<rect x="225" y="396" width="1" height="3" fill="#00ffff"/>
<rect x="234" y="396" width="1" height="3" fill="#00ffff"/>
<rect x="226" y="402" width="8" height="1" fill="#00ffff"/>
<rect x="226" y="404" width="8" height="1" fill="#00ffff"/>
<rect x="226" y="402" width="1" height="3" fill="#00ffff"/>
<rect x="233" y="402" width="1" height="3" fill="#00ffff"/>
<rect x="228" y="422" width="4" height="1" fill="#00ffff"/>
<rect x="228" y="424" width="4" height="1" fill="#00ffff"/>
<rect x="228" y="422" width="1" height="3" fill="#00ffff"/>
<rect x="231" y="422" width="1" height="3" fill="#00ffff"/>
<rect x="226" y="447" width="8" height="1" fill="#00ffff"/>
<rect x="226" y="452" width="8" height="1" fill="#00ffff"/>
<rect x="226" y="447" width="1" height="6" fill="#00ffff"/>
<rect x="233" y="447" width="1" height="6" fill="#00ffff"/>
<rect x="228" y="397" width="4" height="1" fill="#a05040"/>
<rect x="227" y="403" width="6" height="1" fill="#a05040"/>
<rect x="229" y="407" width="2" height="7" fill="#a05040"/>
<rect x="226" y="416" width="8" height="4" fill="#a05040"/>
<rect x="228" y="415" width="4" height="1" fill="#a05040"/>
<rect x="228" y="417" width="1" height="1" fill="#000"/>
<rect x="231" y="417" width="1" height="1" fill="#000"/>
<rect x="229.5" y="419" width="1.0" height="1" fill="#000"/>
<rect x="226" y="429" width="8" height="2" fill="#a05040"/>
<rect x="226" y="435" width="8" height="1" fill="#a05040"/>
<rect x="226" y="436.5" width="8" height="1.0" fill="#00ffff"/>
<rect x="227" y="449" width="6" height="1" fill="#00ffff"/>
<rect x="287" y="381" width="7" height="3" fill="#00ffff"/>
<rect x="296" y="383" width="54" height="1" fill="#00ffff"/>
<rect x="353" y="381" width="13" height="2" fill="#00ffff"/>
<rect x="351" y="383" width="18" height="1" fill="#00ffff"/>
<rect x="287" y="386" width="16" height="2" fill="#00ffff"/>
<rect x="287" y="388" width="63" height="1" fill="#00ffff"/>
<rect x="351" y="388" width="18" height="1" fill="#00ffff"/>
<rect x="287" y="390" width="27" height="3" fill="#00ffff"/>
<rect x="315" y="392" width="35" height="1" fill="#00ffff"/>
<rect x="351" y="392" width="18" height="1" fill="#00ffff"/>
<rect x="357" y="386" width="5" height="7" fill="#00ffff"/>
<rect x="287" y="394" width="22" height="3" fill="#00ffff"/>
<rect x="294" y="399" width="16" height="3" fill="#00ffff"/>
<rect x="311" y="399" width="14" height="3" fill="#00ffff"/>
<rect x="326" y="401" width="24" height="1" fill="#00ffff"/>
<rect x="351" y="401" width="18" height="1" fill="#00ffff"/>
<rect x="294" y="402" width="10" height="21" fill="#00ffff"/>
<rect x="294" y="423" width="12" height="29" fill="#00ffff"/>
<rect x="298" y="453" width="30" height="3" fill="#00ffff"/>
<rect x="329" y="455" width="21" height="1" fill="#00ffff"/>
<rect x="351" y="455" width="18" height="1" fill="#00ffff"/>
<rect x="358" y="398" width="3" height="58" fill="#00ffff"/>
<rect x="305" y="404" width="45" height="1.2" fill="#00ffff"/>
<rect x="351" y="404" width="18" height="1.2" fill="#00ffff"/>
<rect x="305" y="406.5" width="45" height="1.2" fill="#00ffff"/>
<rect x="351" y="406.5" width="18" height="1.2" fill="#00ffff"/>
<rect x="305" y="409" width="45" height="1.2" fill="#00ffff"/>
<rect x="351" y="409" width="18" height="1.2" fill="#00ffff"/>
<rect x="305" y="411.6" width="45" height="1.2" fill="#00ffff"/>
<rect x="351" y="411.6" width="18" height="1.2" fill="#00ffff"/>
<rect x="305" y="414.3" width="45" height="1.2" fill="#00ffff"/>
<rect x="351" y="414.3" width="18" height="1.2" fill="#00ffff"/>
<rect x="305" y="416.8" width="45" height="1.2" fill="#00ffff"/>
<rect x="351" y="416.8" width="18" height="1.2" fill="#00ffff"/>
<rect x="305" y="419.6" width="45" height="1.2" fill="#00ffff"/>
<rect x="351" y="419.6" width="18" height="1.2" fill="#00ffff"/>
<rect x="305" y="422" width="45" height="1.2" fill="#00ffff"/>
<rect x="351" y="422" width="18" height="1.2" fill="#00ffff"/>
<rect x="307" y="425.2" width="43" height="1.2" fill="#00ffff"/>
<rect x="351" y="425.2" width="18" height="1.2" fill="#00ffff"/>
<rect x="307" y="428" width="43" height="1.2" fill="#00ffff"/>
<rect x="351" y="428" width="18" height="1.2" fill="#00ffff"/>
<rect x="307" y="430.8" width="43" height="1.2" fill="#00ffff"/>
<rect x="351" y="430.8" width="18" height="1.2" fill="#00ffff"/>
<rect x="307" y="433.4" width="43" height="1.2" fill="#00ffff"/>
<rect x="351" y="433.4" width="18" height="1.2" fill="#00ffff"/>
<rect x="307" y="436" width="43" height="1.2" fill="#00ffff"/>
<rect x="351" y="436" width="18" height="1.2" fill="#00ffff"/>
<rect x="307" y="438.7" width="43" height="1.2" fill="#00ffff"/>
<rect x="351" y="438.7" width="18" height="1.2" fill="#00ffff"/>
<rect x="307" y="441.1" width="43" height="1.2" fill="#00ffff"/>
<rect x="351" y="441.1" width="18" height="1.2" fill="#00ffff"/>
<rect x="307" y="443.9" width="43" height="1.2" fill="#00ffff"/>
<rect x="351" y="443.9" width="18" height="1.2" fill="#00ffff"/>
<rect x="307" y="446.6" width="43" height="1.2" fill="#00ffff"/>
<rect x="351" y="446.6" width="18" height="1.2" fill="#00ffff"/>
<rect x="307" y="449.1" width="43" height="1.2" fill="#00ffff"/>
<rect x="351" y="449.1" width="18" height="1.2" fill="#00ffff"/>
<rect x="379" y="381" width="21" height="3" fill="#00ffff"/>
<rect x="386" y="386" width="24" height="2" fill="#00ffff"/>
<rect x="386" y="388" width="40" height="3" fill="#00ffff"/>
<rect x="426" y="388" width="16" height="1" fill="#00ffff"/>
<rect x="426" y="390" width="16" height="1" fill="#00ffff"/>
<rect x="390" y="391" width="52" height="3" fill="#00ffff"/>
<rect x="443" y="385" width="18" height="9" fill="#00ffff"/>
<rect x="386" y="395" width="27" height="8" fill="#00ffff"/>
<rect x="413" y="396" width="29" height="1" fill="#00ffff"/>
<rect x="413" y="398" width="29" height="1" fill="#00ffff"/>
<rect x="413" y="401" width="29" height="1" fill="#00ffff"/>
<rect x="390" y="403" width="38" height="3" fill="#00ffff"/>
<rect x="429" y="405" width="13" height="1" fill="#00ffff"/>
<rect x="443" y="395" width="18" height="16" fill="#00ffff"/>
<rect x="379" y="408" width="25" height="3" fill="#00ffff"/>
<rect x="405" y="410" width="37" height="1" fill="#00ffff"/>
<rect x="379" y="412" width="22" height="3" fill="#00ffff"/>
<rect x="386" y="416" width="25" height="6" fill="#00ffff"/>
<rect x="412" y="417" width="17" height="2" fill="#00ffff"/>
<rect x="430" y="419" width="12" height="1" fill="#00ffff"/>
<rect x="412" y="421" width="30" height="1" fill="#00ffff"/>
<rect x="443" y="419" width="18" height="1" fill="#00ffff"/>
<rect x="443" y="421" width="18" height="1" fill="#00ffff"/>
<rect x="450" y="416" width="2" height="6" fill="#00ffff"/>
<rect x="386" y="423" width="27" height="5" fill="#00ffff"/>
<rect x="414" y="424" width="13" height="2" fill="#00ffff"/>
<rect x="428" y="426" width="14" height="1" fill="#00ffff"/>
<rect x="413" y="427" width="29" height="1" fill="#00ffff"/>
<rect x="443" y="426" width="18" height="1" fill="#00ffff"/>
<rect x="443" y="428" width="18" height="1" fill="#00ffff"/>
<rect x="451" y="424" width="2" height="5" fill="#00ffff"/>
<rect x="379" y="431" width="43" height="2" fill="#00ffff"/>
<rect x="444" y="388" width="13" height="1" fill="#000"/>
<rect x="449" y="390.5" width="9" height="1.0" fill="#000"/>
<rect x="459" y="386" width="2" height="2" fill="#000"/>
<rect x="459" y="392" width="2" height="1" fill="#000"/>
<rect x="459" y="397" width="2" height="1" fill="#000"/>
<rect x="459" y="400" width="2" height="1" fill="#000"/>
<rect x="459" y="403" width="2" height="1" fill="#000"/>
<rect x="459" y="406" width="2" height="1" fill="#000"/>
<rect x="443" y="405" width="2" height="1" fill="#000"/>
<rect x="443" y="399" width="1" height="1" fill="#000"/>
<rect x="447" y="409" width="8" height="1" fill="#000"/>
<rect x="448" y="412" width="8" height="1" fill="#000"/>
<rect x="403" y="413" width="26" height="1" fill="#90e090"/>
<rect x="403" y="415" width="26" height="1" fill="#90e090"/>
<rect x="403" y="413" width="1" height="3" fill="#90e090"/>
<rect x="428" y="413" width="1" height="3" fill="#90e090"/>
<rect x="408" y="413" width="9" height="2" fill="#90e090"/>
<rect x="418" y="413" width="9" height="2" fill="#90e090"/>
<rect x="446" y="411" width="12" height="3" fill="#90e090"/>
<rect x="487" y="380" width="96" height="1" fill="#ffffff"/>
<rect x="487" y="417" width="96" height="1" fill="#ffffff"/>
<rect x="487" y="380" width="1" height="38" fill="#ffffff"/>
<rect x="582" y="380" width="1" height="38" fill="#ffffff"/>
<rect x="487" y="385" width="96" height="1" fill="#ffffff"/>
<rect x="487" y="391" width="96" height="1" fill="#ffffff"/>
<rect x="487" y="395" width="96" height="1" fill="#8c8c8c"/>
<rect x="487" y="404" width="96" height="1" fill="#8c8c8c"/>
<rect x="487" y="408" width="96" height="1" fill="#8c8c8c"/>
<rect x="487" y="412" width="96" height="1" fill="#8c8c8c"/>
<rect x="518" y="385" width="1" height="33" fill="#8c8c8c"/>
<rect x="550" y="385" width="1" height="33" fill="#8c8c8c"/>
<rect x="524" y="381" width="21" height="3" fill="#00ffff"/>
<rect x="532" y="386" width="5" height="3" fill="#00ffff"/>
<rect x="561" y="386" width="10" height="3" fill="#00ffff"/>
<rect x="488" y="391" width="21" height="3" fill="#00ffff"/>
<rect x="530" y="392" width="9" height="2" fill="#00ffff"/>
<rect x="561" y="392" width="10" height="2" fill="#00ffff"/>
<rect x="488" y="396" width="11" height="3" fill="#00ffff"/>
<rect x="526" y="396" width="17" height="7" fill="#00ffff"/>
<rect x="524" y="398" width="21" height="3" fill="#00ffff"/>
<rect x="566" y="398" width="1" height="2" fill="#00ffff"/>
<rect x="488" y="405" width="16" height="2" fill="#00ffff"/>
<rect x="545" y="405" width="11" height="2" fill="#00ffff"/>
<rect x="488" y="409" width="28" height="3" fill="#00ffff"/>
<rect x="545" y="409" width="11" height="3" fill="#00ffff"/>
<rect x="488" y="413" width="18" height="3" fill="#00ffff"/>
<rect x="550" y="413" width="1" height="3" fill="#00ffff"/>
<rect x="548" y="381" width="13" height="4" fill="#90e090"/>
<rect x="561" y="382.5" width="8" height="2.5" fill="#90e090"/>
<rect x="487" y="421" width="29" height="3" fill="#00ffff"/>
<rect x="549" y="421" width="33" height="3" fill="#00ffff"/>
<rect x="487" y="425" width="96" height="1" fill="#ffffff"/>
<rect x="487" y="463" width="96" height="1" fill="#ffffff"/>
<rect x="487" y="425" width="1" height="39" fill="#ffffff"/>
<rect x="582" y="425" width="1" height="39" fill="#ffffff"/>
<rect x="514" y="426" width="41" height="4" fill="#00ffff"/>
<rect x="487" y="430" width="96" height="1" fill="#ffffff"/>
<rect x="518" y="430" width="1" height="34" fill="#8c8c8c"/>
<rect x="550" y="430" width="1" height="34" fill="#8c8c8c"/>
<rect x="534" y="436" width="1" height="28" fill="#8c8c8c"/>
<rect x="567" y="436" width="1" height="28" fill="#8c8c8c"/>
<rect x="527" y="431" width="14" height="3" fill="#00ffff"/>
<rect x="560" y="431" width="12" height="3" fill="#00ffff"/>
<rect x="518" y="436" width="65" height="1" fill="#8c8c8c"/>
<rect x="524" y="437" width="5" height="3" fill="#00ffff"/>
<rect x="537" y="437" width="10" height="3" fill="#00ffff"/>
<rect x="555" y="437" width="6" height="3" fill="#00ffff"/>
<rect x="569" y="437" width="10" height="3" fill="#00ffff"/>
<rect x="487" y="441" width="96" height="1" fill="#ffffff"/>
<rect x="487" y="445" width="96" height="1" fill="#8c8c8c"/>
<rect x="487" y="450" width="96" height="1" fill="#8c8c8c"/>
<rect x="487" y="454" width="96" height="1" fill="#8c8c8c"/>
<rect x="487" y="459" width="96" height="1" fill="#8c8c8c"/>
<rect x="488" y="442" width="21" height="3" fill="#00ffff"/>
<rect x="488" y="446" width="11" height="3" fill="#00ffff"/>
<rect x="488" y="450" width="16" height="3" fill="#00ffff"/>
<rect x="488" y="455" width="28" height="3" fill="#00ffff"/>
<rect x="488" y="459" width="18" height="3" fill="#00ffff"/>
<rect x="526" y="442" width="2" height="4" fill="#00ffff"/>
<rect x="526.5" y="447" width="1.0" height="2.5" fill="#00ffff"/>
<rect x="542" y="442" width="2" height="4" fill="#00ffff"/>
<rect x="542.5" y="447" width="1.0" height="2.5" fill="#00ffff"/>
<rect x="558" y="442" width="2" height="4" fill="#00ffff"/>
<rect x="558.5" y="447" width="1.0" height="2.5" fill="#00ffff"/>
<rect x="575" y="442" width="2" height="4" fill="#00ffff"/>
<rect x="575.5" y="447" width="1.0" height="2.5" fill="#00ffff"/>
<rect x="534" y="451.5" width="2" height="3.0" fill="#00ffff"/>
<rect x="534" y="455.5" width="2" height="2.5" fill="#00ffff"/>
<rect x="534" y="459.5" width="2" height="2.5" fill="#00ffff"/>
<rect x="566" y="451.5" width="2" height="3.0" fill="#00ffff"/>
<rect x="566" y="455.5" width="2" height="2.5" fill="#00ffff"/>
<rect x="566" y="459.5" width="2" height="2.5" fill="#00ffff"/>
</g>
<path d="M110 286.5L212.5 328.7" stroke="#ff0000" stroke-width="1.2"/>
<rect x="0" y="368" width="270" height="1" fill="#d07868" shape-rendering="crispEdges"/>
<path d="M185.3 334L192.8 353.2L187 353.5" stroke="#00ffff" stroke-width="1.2" fill="none"/>
<g fill="#00ffff" shape-rendering="crispEdges"><rect x="315" y="358" width="8" height="3"/><rect x="318.5" y="357" width="2" height="1"/><rect x="316" y="351" width="8" height="6"/><rect x="317" y="350" width="6" height="1"/><rect x="319" y="348" width="1" height="2"/><rect x="315" y="354" width="1" height="2"/></g><g fill="#000" shape-rendering="crispEdges"><rect x="317" y="353" width="1.5" height="3"/><rect x="321" y="353" width="1.5" height="3"/></g>
<text x="454" y="177" font-family="Liberation Sans" font-size="13" font-weight="bold" fill="#00ffff" textLength="34.5" lengthAdjust="spacingAndGlyphs">TITLE</text>
<text x="454" y="193" font-family="Liberation Sans" font-size="13" font-weight="bold" fill="#00ffff" textLength="34.5" lengthAdjust="spacingAndGlyphs">TITLE</text>
<g>
<defs><clipPath id="ph"><rect x="400" y="214" width="141.5" height="88.5"/></clipPath>
<filter id="bl" x="-10%" y="-10%" width="120%" height="120%"><feGaussianBlur stdDeviation="1.2"/></filter><filter id="bl2" x="-10%" y="-10%" width="120%" height="120%"><feGaussianBlur stdDeviation="0.5"/></filter></defs>
<g clip-path="url(#ph)">
<rect x="400" y="214" width="142" height="89" fill="#c6c6c6"/>
<g filter="url(#bl)">
<rect x="398" y="212" width="146" height="28" fill="#d6d6d2"/>
<rect x="398" y="212" width="22" height="28" fill="#b8b8b8"/>
<ellipse cx="437" cy="229" rx="12" ry="8" fill="#f0f0f0"/>
<ellipse cx="452" cy="222" rx="9" ry="5" fill="#e6e6e6"/>
<ellipse cx="478" cy="219" rx="10" ry="5" fill="#ececec"/>
<ellipse cx="536" cy="225" rx="9" ry="6" fill="#fafafa"/>
<ellipse cx="405" cy="219" rx="8" ry="5" fill="#f4f4f4"/>
<ellipse cx="498" cy="236" rx="18" ry="5" fill="#b4b4b4"/>
<path d="M398 239 L412 237 L425 241 L438 241 L450 240 L462 242 L476 237 L490 239 L503 241 L514 238 L526 236 L544 238 L544 247 L398 247 Z" fill="#474747"/>
<rect x="398" y="236" width="22" height="36" fill="#3e3e3e"/>
<rect x="523" y="236" width="21" height="28" fill="#3c3c3c"/>
<rect x="420" y="246" width="104" height="12" fill="#d0d0d0"/>
<rect x="424" y="247" width="8" height="5" fill="#707070"/>
<rect x="420" y="259" width="104" height="10" fill="#9a9a9a"/>
<rect x="432" y="259" width="20" height="6" fill="#c0c0c0"/><rect x="470" y="259" width="24" height="5" fill="#b0b0b0"/>
</g>
<rect x="400" y="269" width="142" height="34" fill="#cbcbcb"/>
<g filter="url(#bl2)">
<rect x="415" y="281" width="11" height="7" rx="2" fill="#707070"/><rect x="417" y="282" width="6" height="3" fill="#a0a0a0"/>
<rect x="441" y="288" width="21" height="6" rx="2.5" fill="#f2f2f2"/><rect x="446" y="287" width="7" height="2" fill="#b0b0b0"/><circle cx="446" cy="294" r="1.2" fill="#505050"/><circle cx="457" cy="294" r="1.2" fill="#505050"/>
<rect x="459" y="276" width="12" height="6" rx="2" fill="#f4f4f4"/><rect x="459" y="281" width="12" height="1" fill="#808080"/>
<rect x="479" y="275" width="11" height="5" rx="1.5" fill="#4a4a4a"/>
<rect x="490" y="275" width="9" height="5" rx="1.5" fill="#a0a0a0"/>
<rect x="523" y="268.5" width="14" height="6" rx="2" fill="#ececec"/>
<rect x="525" y="281" width="15" height="10" rx="2.5" fill="#5e5e5e"/><rect x="527" y="283" width="11" height="3" fill="#8a8a8a"/>
<rect x="479" y="288" width="18" height="10" rx="2" fill="#4a4a4a"/><rect x="490" y="293" width="7" height="5" fill="#a8a8a8"/>
<rect x="496" y="287.5" width="15" height="10" rx="2" fill="#565656"/><rect x="503" y="293" width="7" height="4" fill="#9a9a9a"/>
<rect x="513" y="298" width="16" height="5" rx="2" fill="#6a6a6a"/>
<rect x="409" y="293" width="15" height="2" fill="#8a8a8a"/>
<rect x="440" y="276" width="2" height="6" fill="#a0a0a0"/>
</g>
</g>
</g>
<path d="M399.5 212v92M397 214.5h147M541.5 212v92M397 302.5h147" stroke="#a0a0a0" stroke-width="1" fill="none" stroke-dasharray="3 138 3 0"/>
<text x="417" y="271.5" font-family="Liberation Serif" font-size="30.5" fill="#ff0000" textLength="113" lengthAdjust="spacingAndGlyphs">SAMPLE</text>
</g>
<rect x="58" y="157" width="1" height="323" fill="#8ccc66" shape-rendering="crispEdges"/>
<rect x="51.5" y="362.5" width="6" height="12" fill="none" stroke="#fff" stroke-width="1"/>
<path d="M57.5 357.5v16l3.5-3.5 3 7 2.5-1-3-6.5h5z" fill="#fff" stroke="#000" stroke-width="1"/>
</svg>
</body></html>
